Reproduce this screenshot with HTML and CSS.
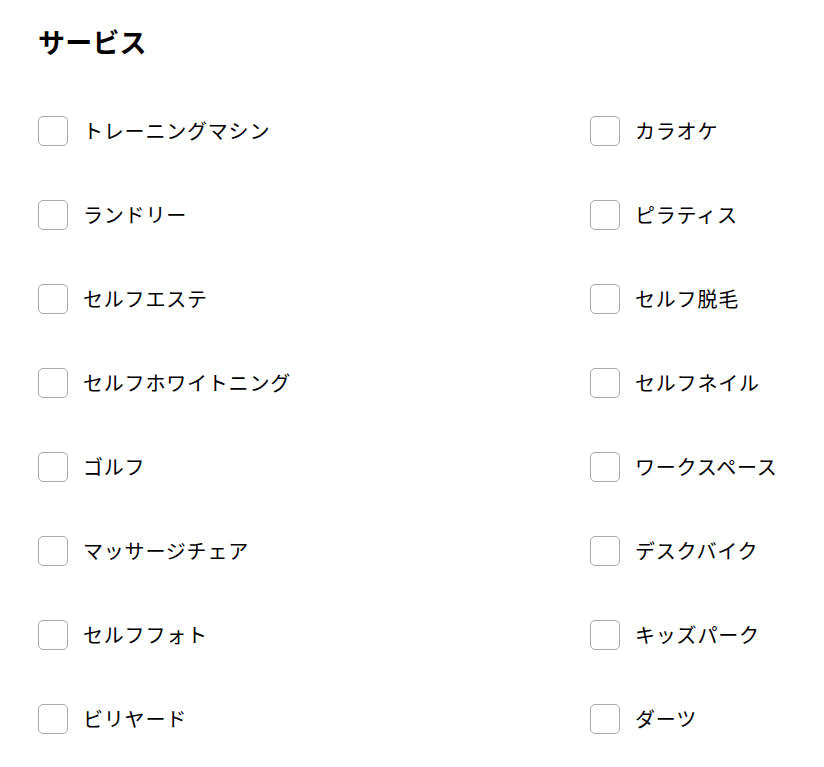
FILE: index.html
```html
<!DOCTYPE html>
<html>
  <head>
    <title>サービス</title>
    <link rel="stylesheet" href="styles.css">
  </head>
  <body>
    <section class="services">
      <h2>サービス</h2>
      <div class="options">
        <label class="option"><input type="checkbox"><span class="box"></span>トレーニングマシン</label>
        <label class="option"><input type="checkbox"><span class="box"></span>カラオケ</label>
        <label class="option"><input type="checkbox"><span class="box"></span>ランドリー</label>
        <label class="option"><input type="checkbox"><span class="box"></span>ピラティス</label>
        <label class="option"><input type="checkbox"><span class="box"></span>セルフエステ</label>
        <label class="option"><input type="checkbox"><span class="box"></span>セルフ脱毛</label>
        <label class="option"><input type="checkbox"><span class="box"></span>セルフホワイトニング</label>
        <label class="option"><input type="checkbox"><span class="box"></span>セルフネイル</label>
        <label class="option"><input type="checkbox"><span class="box"></span>ゴルフ</label>
        <label class="option"><input type="checkbox"><span class="box"></span>ワークスペース</label>
        <label class="option"><input type="checkbox"><span class="box"></span>マッサージチェア</label>
        <label class="option"><input type="checkbox"><span class="box"></span>デスクバイク</label>
        <label class="option"><input type="checkbox"><span class="box"></span>セルフフォト</label>
        <label class="option"><input type="checkbox"><span class="box"></span>キッズパーク</label>
        <label class="option"><input type="checkbox"><span class="box"></span>ビリヤード</label>
        <label class="option"><input type="checkbox"><span class="box"></span>ダーツ</label>
      </div>
    </section>
  </body>
</html>
```

FILE: styles.css
```css
body{
    margin: 0;
    font-family: "Noto Sans CJK JP", "Noto Sans", sans-serif;
    color: #000;
    background: #fff;
}
.services{
    padding: 21px 38px 0 38px;
}
.services h2{
    margin: 0;
    font-size: 27px;
    font-weight: 700;
    line-height: 42px;
    letter-spacing: 0.2px;
}
.options{
    display: grid;
    grid-template-columns: 552px 1fr;
    grid-auto-rows: 84px;
    margin-top: 26px;
}
.option{
    display: flex;
    align-items: center;
    font-size: 20px;
    line-height: 28px;
    letter-spacing: 0.8px;
    cursor: pointer;
}
.option input{
    display: none;
}
.box{
    width: 28px;
    height: 28px;
    border: 1px solid #aaa;
    border-radius: 5px;
    margin-right: 15px;
    flex: none;
}
```
